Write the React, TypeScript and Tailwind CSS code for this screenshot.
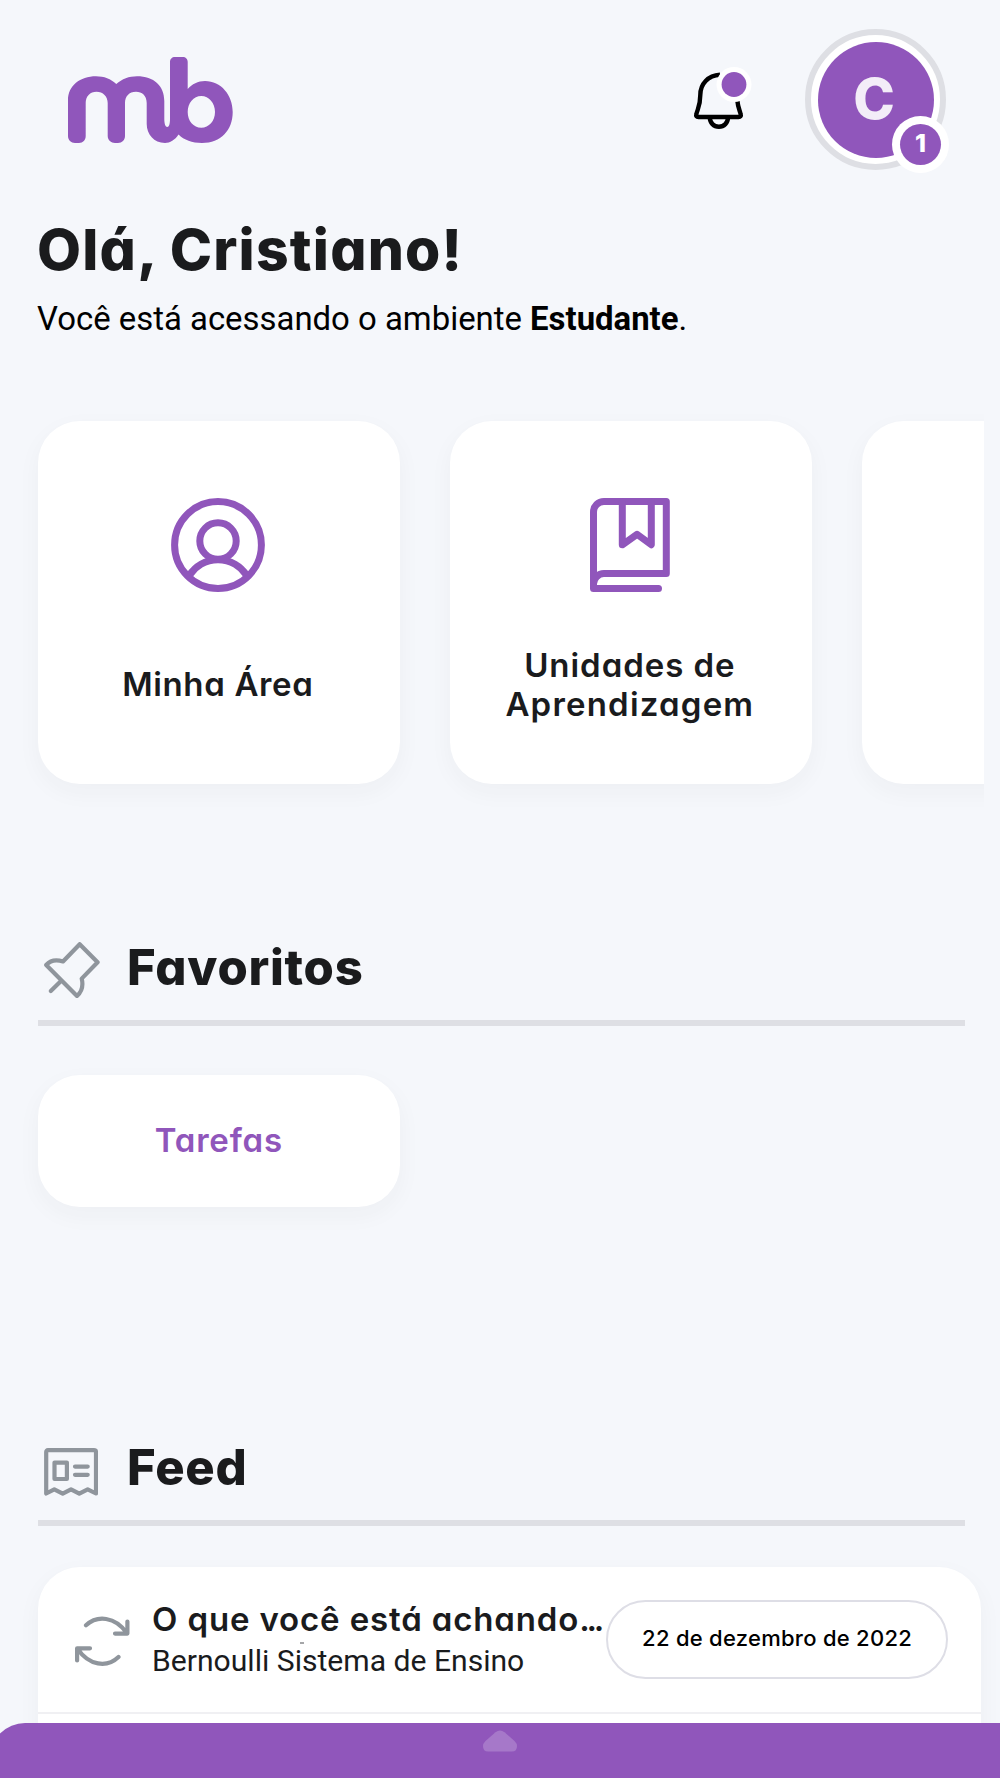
import type { ReactNode } from 'react';

function Logo() {
  return (
    <svg className="w-[165px] h-[86px] shrink-0" viewBox="0 0 165 86" fill="#9056bb" aria-label="mb">
      <path
        fillRule="evenodd"
        d="M0 43C0 29 12 19.3 28 19.3C36 19.3 43 22 48.3 27C54 22 61 19.3 69 19.3C86 19.3 96.3 29 96.3 44V62C96.3 67 97.5 70 99.3 70C101 70 102 67 102 62V5C102 2 104 0 107 0H114.7C117.7 0 119.7 2 119.7 5V32C124 27 130 24 137 24C153 24 164.7 38 164.7 55C164.7 73 153 86 134 86C124 86 116 83 110.5 77.5C107 83 102 86 97 86C86 86 78.7 77 78.7 67V46C78.7 38.5 74 34.7 68 34.7C61 34.7 57 39.5 57 46V79C57 83 54 86 50 86H47C43 86 39.7 83 39.7 79V46C39.7 39.5 35 34.7 28.5 34.7C22 34.7 17.7 39.5 17.7 46V79C17.7 83 15 86 11 86H7C3 86 0 83 0 79ZM133.3 39C125.5 39 119.7 46 119.7 55C119.7 64 125.5 70.7 133.3 70.7C141 70.7 147 64 147 55C147 46 141 39 133.3 39Z"
      />
    </svg>
  );
}

function BellIcon() {
  return (
    <svg className="w-[49px] h-[57px] shrink-0 overflow-visible" viewBox="0 0 49 57" fill="none" stroke="#000" strokeWidth="4.4" strokeLinejoin="round">
      <path d="M26 2.8C14 3.5 6.3 12 6.3 23C6.3 33 4 36 2.4 42C1.8 44 2.5 45 4.5 45H44.5C46.5 45 47.2 44 46.6 42C45.5 38 43.8 34 43.4 29" />
      <path d="M15.8 45C15.8 51 19.8 54.8 24.9 54.8C30 54.8 34 51 34 45" />
      <circle cx="40" cy="12.5" r="17.5" fill="#fff" stroke="none" />
      <circle cx="40" cy="12.5" r="12.4" fill="#9056bb" stroke="none" />
    </svg>
  );
}

function UserIcon() {
  return (
    <svg className="w-[94px] h-[94px]" viewBox="0 0 94 94" fill="none" stroke="#9056bb" strokeWidth="7">
      <circle cx="47" cy="47" r="43.4" />
      <circle cx="47" cy="43" r="18.2" />
      <path d="M18.6 77A34 34 0 0 1 75.4 77" />
    </svg>
  );
}

function BookIcon() {
  return (
    <svg className="w-20 h-[94px]" viewBox="0 0 80 94" fill="none" stroke="#9056bb" strokeWidth="7" strokeLinecap="round" strokeLinejoin="round">
      <path d="M3.5 86V14A10.5 10.5 0 0 1 14 3.5H76.3V75.6H14A10.5 10.5 0 0 0 3.5 86V90.4H68.5" />
      <path d="M32.3 4V46.8L47 36.3L61.3 46.8V4" />
    </svg>
  );
}

function PinIcon() {
  return (
    <svg className="w-14 h-14" viewBox="0 0 56 56" fill="none" stroke="#8f959c" strokeWidth="4.2" strokeLinecap="round" strokeLinejoin="round">
      <path d="M35.7 2.2L53.6 20.3L37.7 36.6C39.5 44 37.5 50 33 54L2.2 23C7 17.5 13 17.5 19 19.5Z" />
      <path d="M16.5 39.5L6.8 49" />
    </svg>
  );
}

function NewsIcon() {
  return (
    <svg className="w-[54px] h-12 mt-[3px]" viewBox="0 0 54 48" fill="none" stroke="#8f959c" strokeWidth="4.2" strokeLinecap="round" strokeLinejoin="round">
      <path d="M2.2 45.5V4Q2.2 2.2 4 2.2H50Q52 2.2 52 4V45.5L43.7 41.3L35.3 45.7L27 41.3L18.7 45.7L10.3 41.3Z" />
      <rect x="10.5" y="14.6" width="12.4" height="16.4" />
      <path d="M31 18.6H43.7M31 26.8H43.7" />
    </svg>
  );
}

function RefreshIcon() {
  return (
    <svg className="w-[55px] h-[51px] shrink-0" viewBox="0 0 55 51" fill="none" stroke="#8f959c" strokeWidth="4.2" strokeLinecap="round" strokeLinejoin="round">
      <path d="M11 9.3C22 -1 40 0 52.2 17.4M52.4 5.5V17.6H40" />
      <path d="M43.5 41C32 52 14 50 2.3 32.4M2.1 44.5V32.3H15" />
    </svg>
  );
}

interface ShortcutCardProps {
  label?: ReactNode;
  icon?: ReactNode;
}

function ShortcutCard({ label, icon }: ShortcutCardProps) {
  return (
    <div className="w-[362.5px] h-[362.5px] shrink-0 bg-white rounded-[42px] shadow-[0_8px_24px_rgba(40,40,60,0.04)] flex flex-col items-center pt-[76.7px] pr-[2px]">
      {icon}
      <div className="mt-[53px] h-[80px] flex items-center text-center text-[33px] leading-[38.5px] font-semibold">
        <div>{label}</div>
      </div>
    </div>
  );
}

interface SectionTitleProps {
  title: ReactNode;
  icon: ReactNode;
}

function SectionTitle({ title, icon }: SectionTitleProps) {
  return (
    <div className="w-[927px] h-[86px] border-b-6 border-[#dedfe4] flex items-start">
      <div className="w-[89.5px] h-[60px] pl-[6px] flex items-center">{icon}</div>
      <h2 className="text-[49px] leading-[56px] font-extrabold">{title}</h2>
    </div>
  );
}

export default function App() {
  return (
    <div className="relative w-[1000px] h-[1778px] overflow-hidden bg-[#f5f7fb] text-[#1a1b1d] font-[Inter,sans-serif] [font-feature-settings:'cv11'] whitespace-nowrap">
      <header className="h-[220px] pl-[68px] flex items-start">
        <div className="pt-[57px]">
          <Logo />
        </div>
        <div className="pt-[72px] ml-[461px]">
          <BellIcon />
        </div>
        <div className="relative ml-[62px] mt-[29px] w-[141px] h-[141px] rounded-full bg-white border-[6.5px] border-[#dedfe4] p-[6.5px]">
          <div className="w-full h-full rounded-full bg-[#9056bb] text-[#f3edf8] flex items-center justify-center pr-[3px] pb-[2px] text-[56px] leading-none font-extrabold">
            C
          </div>
          <div className="absolute left-[81px] top-[81px] w-[57px] h-[57px] rounded-full bg-white p-[8px]">
            <div className="w-full h-full rounded-full bg-[#9056bb] text-white flex items-center justify-center text-[25px] leading-none font-extrabold pb-[2px]">
              1
            </div>
          </div>
        </div>
      </header>

      <div className="pl-[37px] h-[201px]">
        <h1 className="text-[57px] leading-[60px] font-extrabold tracking-[1.2px]">Olá, Cristiano!</h1>
        <p className="mt-[19px] text-[32.9px] leading-[40px] text-black font-[Roboto,sans-serif]">
          Você está acessando o ambiente <b>Estudante</b>.
        </p>
      </div>

      {/* Shortcuts, scrolls sideways */}
      <div className="w-[984px] h-[400px] pl-[37.6px] flex gap-[49.5px] [overflow-x:clip]">
        <ShortcutCard icon={<UserIcon />} label={<span className="tracking-[0.65px]">Minha Área</span>} />
        <ShortcutCard
          icon={<BookIcon />}
          label={
            <>
              <span className="tracking-[0.95px]">Unidades de</span>
              <br />
              <span className="tracking-[1.2px]">Aprendizagem</span>
            </>
          }
        />
        <ShortcutCard />
      </div>

      <section className="pl-[37.6px] pt-[119px] h-[500px]">
        <SectionTitle icon={<PinIcon />} title={<span className="tracking-[0.75px]">Favoritos</span>} />
        <div className="mt-[49px] w-[362.5px] h-[132px] bg-white rounded-[42px] shadow-[0_8px_24px_rgba(40,40,60,0.04)] flex items-center justify-center text-[33px] font-semibold tracking-[0.85px] text-[#9056bb]">
          Tarefas
        </div>
      </section>

      <section className="pl-[37.6px] pt-[119px]">
        <SectionTitle icon={<NewsIcon />} title={<span className="tracking-[0.65px]">Feed</span>} />
        <div className="mt-[41px] w-[943.5px] h-[260px] bg-white rounded-[42px] shadow-[0_8px_24px_rgba(40,40,60,0.04)]">
          <div className="h-[147px] border-b-2 border-[#f0f0f3] pl-[37px] flex items-start">
            <div className="pt-[49px]">
              <RefreshIcon />
            </div>
            <div className="relative ml-[22.5px] w-[454px] pt-[32px]">
              <h3 className="text-[33px] leading-[40px] font-semibold tracking-[0.85px]">
                O que você está achando<span className="tracking-[-3.3px]">...</span>
              </h3>
              <p className="mt-[3px] text-[30.1px] leading-[38px] font-[Roboto,sans-serif]">Bernoulli Sistema de Ensino</p>
              <i className="absolute left-[148px] top-[75px] w-[4px] h-[2px] bg-[#a5a6a8]" />
            </div>
            <div className="mt-[33px] w-[342px] h-[79px] rounded-full border-[2.5px] border-[#dedee6] flex items-center justify-center pb-[2px] text-[22px] font-medium tracking-[0.27px] text-black">
              22 de dezembro de 2022
            </div>
          </div>
        </div>
      </section>

      {/* Bottom drawer handle */}
      <div className="absolute -left-[10px] bottom-0 w-[1020px] h-[55px] bg-[#9056bb] rounded-tl-[35px] flex justify-center pt-[7px]">
        <svg className="w-[34px] h-[22px]" viewBox="0 0 34 22" fill="#a678c9">
          <path d="M12.5 2.2Q17 -1.2 21.5 2.2L31.5 11Q34 13.5 34 16Q34 21.5 29 21.5H5Q0 21.5 0 16Q0 13.5 2.5 11Z" />
        </svg>
      </div>
    </div>
  );
}
